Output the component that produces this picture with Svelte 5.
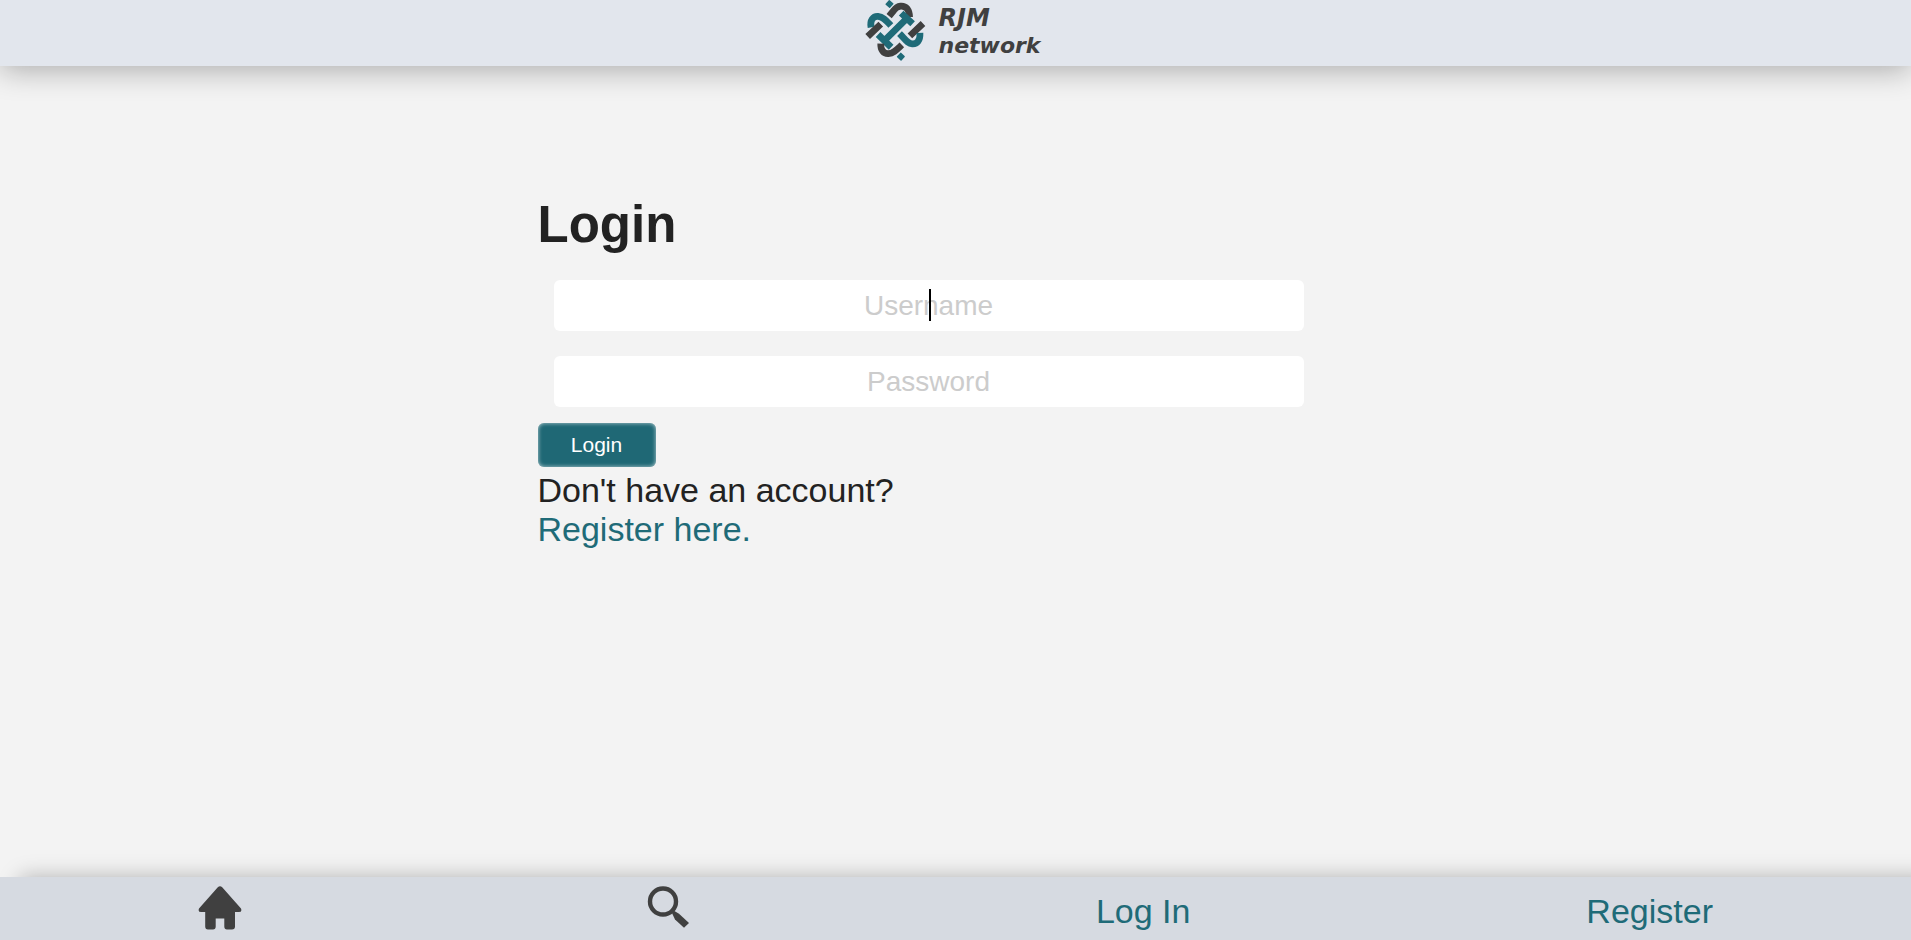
<script>
  let username = $state('');
  let password = $state('');
</script>

<div class="page">
  <header>
    <a class="brand" href="#home" aria-label="RJM network">
      <svg class="mark" viewBox="30 3 182 182" aria-hidden="true">
        <g fill="none" stroke-width="20">
          <path class="dark" d="M102 51 L116 34 C127 19 145 17 156 29 Q163 38 163 54" />
          <path class="teal" d="M48 85 C44 64 54 51 69 52 C84 53 93 64 107 79" />
          <path class="dark" d="M77 75 L38 112 M203 73 L164 110" />
          <path class="teal" d="M155 58 L88 124 M138 42 L172 74 M69 106 L108 144" />
          <path class="teal" d="M133 103 C150 120 157 133 171 134 C186 135 195 123 194 101" />
          <path class="dark" d="M77 133 C76 152 86 164 100 163 C115 162 125 151 140 137" />
        </g>
        <rect class="dot" x="94" y="6" width="18" height="18" rx="2" transform="rotate(42 103 15)" />
        <rect class="dot" x="128" y="163" width="18" height="18" rx="2" transform="rotate(42 137 172)" />
      </svg>
      <span class="name"><span>RJM</span><span class="sub">network</span></span>
    </a>
  </header>

  <main>
    <form onsubmit={(e) => e.preventDefault()}>
      <h1>Login</h1>
      <div class="field">
        <input type="text" placeholder="Username" aria-label="Username" bind:value={username} />
        <span class="caret"></span>
      </div>
      <div class="field">
        <input type="password" placeholder="Password" aria-label="Password" bind:value={password} />
      </div>
      <button type="submit">Login</button>
      <p>Don't have an account?</p>
      <p><a href="#register">Register here.</a></p>
    </form>
  </main>

  <nav>
    <a class="icon" href="#home" aria-label="Home">
      <svg viewBox="0 0 44 44" aria-hidden="true">
        <path d="M19.8 1.2Q22 -.6 24.2 1.2L43 22.4Q44.4 26 40.8 26H37V40.5Q37 43.5 34 43.5H29Q26.3 43.5 26.3 40.5V32.5H17.7V40.5Q17.7 43.5 15 43.5H10Q7.2 43.5 7.2 40.5V26H3.2Q-.4 26 1 22.4Z" />
      </svg>
    </a>
    <a class="icon" href="#search" aria-label="Search">
      <svg viewBox="0 0 44 44" aria-hidden="true">
        <circle cx="16" cy="15.5" r="13" fill="none" stroke="#404040" stroke-width="4.4" />
        <path d="M24.5 26L26.5 24.5L32 27.8L42 37L37 41.8L28 33.5Z" />
      </svg>
    </a>
    <a class="text" href="#login">Log In</a>
    <a class="text" href="#register">Register</a>
  </nav>
</div>

<style>
  :global(body) {
    margin: 0;
    background: #f3f3f3;
    color: #222;
    font-family: "Liberation Sans", Arial, sans-serif;
    font-size: 34px;
  }
  .page {
    display: flex;
    flex-direction: column;
    min-height: 100vh;
    overflow: hidden;
  }
  header {
    display: flex;
    justify-content: center;
    height: 66px;
    background: #e2e6ed;
    box-shadow: 0 4px 30px rgba(0, 0, 0, 0.3);
  }
  .brand {
    display: flex;
    gap: 12px;
    padding-right: 5px;
    color: #404040;
  }
  .mark {
    width: 61px;
    height: 61px;
  }
  .dark { stroke: #404040; }
  .teal { stroke: #1f6b78; }
  .dot { fill: #1f6b78; }
  .name {
    display: flex;
    flex-direction: column;
    padding-top: 4px;
    font-family: "DejaVu Sans", sans-serif;
    font-size: 24px;
    font-style: italic;
    font-weight: 700;
    line-height: 28px;
  }
  .sub { font-size: 22px; }
  main {
    flex: 1;
    display: flex;
    justify-content: center;
    padding: 129px 16px 32px;
  }
  form {
    width: 100%;
    max-width: 836px;
  }
  h1 {
    margin: 0 0 25px;
    font-size: 51px;
    line-height: 60px;
  }
  .field {
    position: relative;
    max-width: 750px;
    margin: 0 16px 25px;
  }
  .field + button { margin-top: -9px; }
  input {
    display: block;
    box-sizing: border-box;
    width: 100%;
    height: 51px;
    padding: 0 8px;
    border: 0;
    border-radius: 6px;
    background: #fff;
    color: #222;
    font: inherit;
    font-size: 28px;
    text-align: center;
  }
  input::placeholder {
    color: #ccc;
    opacity: 1;
  }
  .caret {
    position: absolute;
    top: 9px;
    left: 50%;
    width: 2px;
    height: 32px;
    background: #000;
  }
  button {
    display: block;
    width: 118px;
    height: 44px;
    margin: 0 0 4px;
    padding: 0;
    border: 0;
    border-radius: 6px;
    background: #1f6875;
    box-shadow: inset 0 0 4px rgba(255, 255, 255, 0.7);
    color: #fff;
    font: inherit;
    font-size: 21px;
  }
  p {
    margin: 0;
    line-height: 39px;
  }
  a {
    color: #1f6b78;
    text-decoration: none;
  }
  nav {
    display: flex;
    justify-content: space-around;
    align-items: center;
    height: 63px;
    background: #d6dae1;
    box-shadow: 20px 0 20px rgba(0, 0, 0, 0.27);
  }
  .text { padding-top: 6px; }
  .icon {
    padding: 0 9px 2px 0;
    line-height: 0;
  }
  .icon svg {
    width: 44px;
    height: 44px;
    fill: #404040;
  }
</style>
